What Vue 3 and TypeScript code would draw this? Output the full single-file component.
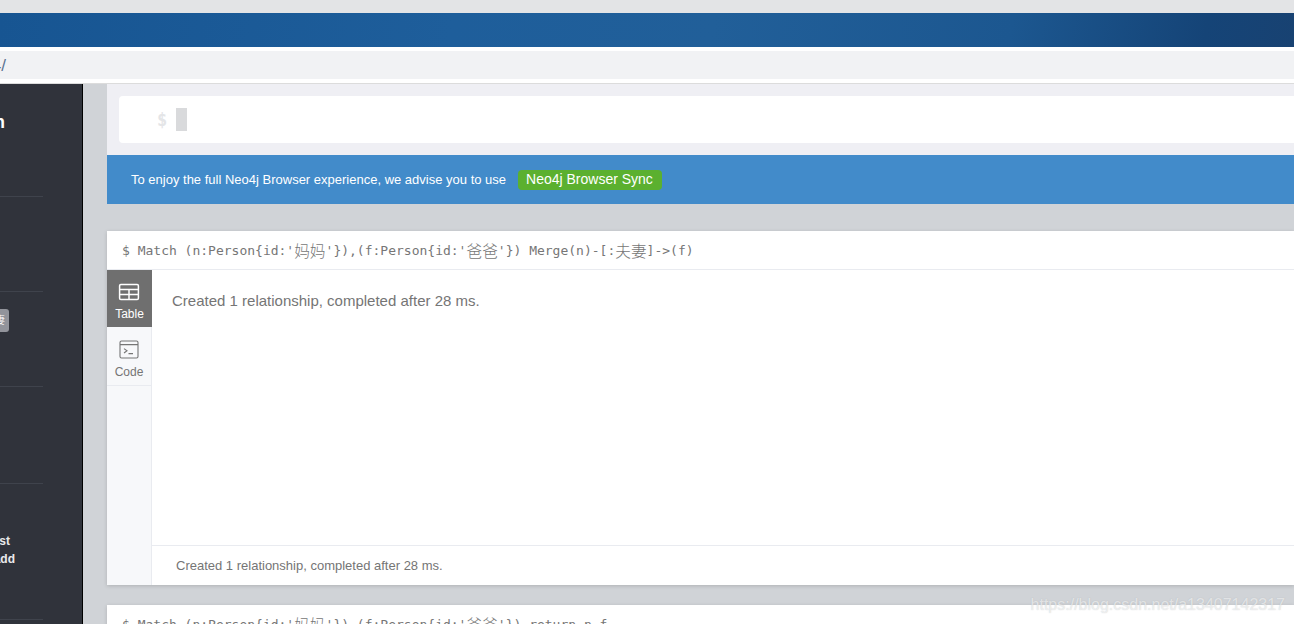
<script setup lang="ts">
</script>

<template>
  <div class="page">
    <div class="chrome-top"></div>
    <div class="brand-bar"></div>
    <div class="spacer"></div>
    <div class="address-bar"><span class="url">http://localhost:7474/</span></div>
    <div class="spacer bottom"></div>
    <div class="app">
      <aside class="drawer">
        <section class="group first"><h3 class="clip title"><span>Database Information</span></h3></section>
        <section class="group g2"></section>
        <section class="group g3"><div class="clip"><span class="badge">夫妻</span></div></section>
        <section class="group g4"></section>
        <section class="group g5">
          <div class="clip note"><span>You are connected as the guest</span></div>
          <div class="clip note n2"><span>Click here to add</span></div>
        </section>
      </aside>
      <main class="stream">
        <div class="frames">
          <div class="editor">
            <div class="input"><span class="prompt">$</span><span class="cursor"></span></div>
          </div>
          <div class="banner">
            <span>To enjoy the full Neo4j Browser experience, we advise you to use</span>
            <span class="sync">Neo4j Browser Sync</span>
          </div>
          <article class="card">
            <header class="card-head">$ Match (n:Person{id:'<span class="cjk">妈妈</span>'}),(f:Person{id:'<span class="cjk">爸爸</span>'}) Merge(n)-[:<span class="cjk">夫妻</span>]-&gt;(f)</header>
            <div class="card-body">
              <nav class="tabs">
                <div class="tab active">
                  <svg width="22" height="18" viewBox="0 0 22 18" fill="none" stroke="currentColor" stroke-width="1.5">
                    <rect x="1.6" y="1.6" width="18.8" height="14.8" rx="1.2" />
                    <path d="M1.6 6.4h18.8M1.6 11.4h18.8M11 6.4v10" />
                  </svg>
                  <span>Table</span>
                </div>
                <div class="tab">
                  <svg width="20" height="19" viewBox="0 0 20 19" fill="none" stroke="currentColor" stroke-width="1.1">
                    <rect x="1" y="1" width="18" height="17" rx="1.5" />
                    <path d="M1 4.6h18M5 8.6l3 2.2-3 2.2M9.5 13.6h4.5" />
                  </svg>
                  <span>Code</span>
                </div>
              </nav>
              <div class="content">
                <p class="result">Created 1 relationship, completed after 28 ms.</p>
                <footer class="status">Created 1 relationship, completed after 28 ms.</footer>
              </div>
            </div>
          </article>
          <article class="card next">
            <header class="card-head">$ Match (n:Person{id:'<span class="cjk">妈妈</span>'}),(f:Person{id:'<span class="cjk">爸爸</span>'}) return n,f</header>
          </article>
        </div>
      </main>
    </div>
    <div class="watermark">https://blog.csdn.net/a13407142317</div>
  </div>
</template>

<style scoped>
.page {
  position: relative;
  width: 1294px;
  height: 624px;
  overflow: hidden;
  display: flex;
  flex-direction: column;
  font-family: "Liberation Sans", Arial, sans-serif;
  background: #fff;
}
.chrome-top { height: 13px; background: #e3e4e6; }
.brand-bar {
  height: 34px;
  background: linear-gradient(100deg, #175592 0%, #1e5e9b 35%, #215f99 55%, #1c5790 78%, #154477 93%, #184272 100%);
}
.spacer { height: 4px; background: #fff; }
.spacer.bottom { height: 5px; border-bottom: 1px solid #dcdcdc; box-sizing: border-box; }
.address-bar {
  height: 28px;
  background: #f1f2f4;
  display: flex;
  align-items: center;
  font-size: 17px;
  white-space: nowrap;
  color: #5b7391;
  padding-top: 2px;
  box-sizing: border-box;
}
.url { margin-left: -158px; flex: none; width: 164px; text-align: right; }
.app { flex: 1; min-height: 0; display: flex; }
.drawer {
  width: 82px;
  flex: none;
  background: #30333b;
  border-right: 1px solid #000;
  color: #fff;
  overflow: hidden;
}
.group { box-sizing: border-box; height: 95px; position: relative; width: 43px; border-bottom: 1px solid #3f434c; }
.group.first { height: 113px; padding-top: 28px; }
.group.g3 { padding-top: 17px; }
.group.g4 { height: 97px; }
.group.g5 { height: 136px; padding-top: 48px; }
.clip { display: flex; justify-content: flex-end; white-space: nowrap; }
.title { margin: 0; width: 5px; font-size: 18px; font-weight: 700; line-height: 20px; }
.g3 .clip { width: 9px; }
.badge {
  display: block;
  height: 23px;
  line-height: 23px;
  padding: 0 4px 0 10px;
  background: #92949b;
  border-radius: 0 3px 3px 0;
  font-size: 10px;
  font-family: "Liberation Sans", "Noto Sans CJK SC", sans-serif;
  flex: none;
}
.note { width: 10px; font-size: 12px; font-weight: 700; line-height: 18px; color: #e9eaeb; }
.note.n2 { width: 15px; }
.stream { flex: 1; min-width: 0; background: #d0d3d7; padding-left: 24px; overflow: hidden; }
.frames { width: 1187px; }
.editor {
  height: 71px;
  box-sizing: border-box;
  padding: 12px 0 12px 12px;
  background: #efeff4;
}
.input {
  height: 47px;
  background: #fff;
  border-radius: 4px 0 0 4px;
  display: flex;
  align-items: center;
  padding-left: 38px;
  gap: 10px;
}
.prompt { font-family: "DejaVu Sans Mono", monospace; font-size: 17px; font-weight: 700; color: #e4e5e7; width: 9px; }
.cursor { width: 11px; height: 23px; background: #d9dadc; }
.banner {
  height: 49px;
  background: #428bca;
  color: #fff;
  font-size: 13px;
  display: flex;
  align-items: center;
  padding-left: 24px;
  gap: 12px;
}
.sync {
  background: #5bb02f;
  border-radius: 4px;
  padding: 0 9px 0 8px;
  height: 20px;
  line-height: 19px;
  font-size: 14px;
}
.card {
  margin-top: 27px;
  background: #fff;
  box-shadow: 0 1px 4px rgba(0, 0, 0, 0.16);
}
.card.next { margin-top: 20px; }
.card-head {
  height: 39px;
  box-sizing: border-box;
  border-bottom: 1px solid #e9ebf0;
  padding: 1px 0 0 15px;
  display: flex;
  align-items: center;
  white-space: pre;
  color: #767676;
  font-size: 13px;
  font-family: "DejaVu Sans Mono", "Noto Sans CJK SC", monospace;
}
.cjk { font-size: 15.7px; font-family: "Noto Sans CJK SC", sans-serif; font-weight: 300; }
.card-body { display: flex; height: 315px; }
.tabs {
  width: 45px;
  flex: none;
  box-sizing: border-box;
  background: #f7f8fa;
  border-right: 1px solid #e9ebf0;
}
.tab {
  height: 59px;
  box-sizing: border-box;
  border-bottom: 1px solid #e9ebf0;
  display: flex;
  flex-direction: column;
  align-items: center;
  padding-top: 13px;
  gap: 6px;
  color: #757575;
  font-size: 12px;
  line-height: 14px;
}
.tab svg { display: block; flex: none; }
.tab.active {
  height: 57px;
  width: 45px;
  background: #6f6f6f;
  color: #fff;
  border-bottom: 0;
}
.tab.active svg { margin-left: -1px; }
.content { flex: 1; min-width: 0; display: flex; flex-direction: column; }
.result {
  margin: 0;
  flex: 1;
  padding: 22px 0 0 20px;
  color: #757575;
  font-size: 15px;
  line-height: 18px;
}
.status {
  height: 40px;
  box-sizing: border-box;
  border-top: 1px solid #e9ebf0;
  padding-left: 24px;
  display: flex;
  align-items: center;
  color: #757575;
  font-size: 13px;
}
.watermark {
  position: absolute;
  right: 9px;
  top: 594px;
  font-size: 16px;
  line-height: 22px;
  color: rgba(255, 255, 255, 0.6);
  text-shadow: 0 0 1px rgba(150, 155, 160, 0.5);
  white-space: nowrap;
}
</style>
